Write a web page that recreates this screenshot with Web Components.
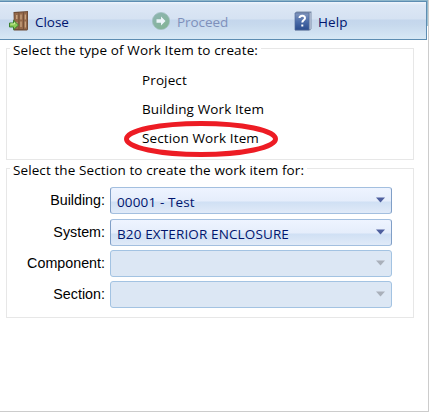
<!DOCTYPE html>
<html lang="en"><head><meta charset="utf-8"><title>Create Work Item</title>
<style>body{margin:0;background:#fff}</style></head><body>
<work-dialog>
  <tool-bar slot="bar">
    <tool-button style="width:143px;--gap:5px;--ls:-.05px">
      <svg slot="icon" width="21" height="20" viewBox="0 0 21 20"><path d="M4.500 1 19 0v18.500L18 19.500H5z" fill="#6f4e38"/><path d="M5.500 2h4v16h-4zM10.300 1.500h3.700v16.500h-3.700zM14.800 1.300H18v17h-3.200z" fill="#95694a"/><path d="M7 4h1.500v4H7zM11.300 3.500h1.400v5h-1.400zM15.700 3.500H17v5h-1.300zM7 11h1.500v4H7zM11.300 10.500h1.400v5.500h-1.400zM15.700 10.500H17v6h-1.300z" fill="#c7a27e"/><path d="M.5 12h4V9.200l5 4.800-5 4.800V16h-4z" fill="#8acb58" stroke="#39812f"/><path d="M1.500 13h4v-1.500" fill="none" stroke="#cdf2a0"/></svg>Close</tool-button>
    <tool-button disabled style="width:142px;--gap:7px;--ls:-.05px">
      <svg slot="icon" width="18" height="18" viewBox="0 0 18 18"><defs><linearGradient id="g" x2=".7" y2="1"><stop stop-color="#8fb5b4"/><stop offset="1" stop-color="#83b496"/></linearGradient></defs><circle cx="9" cy="9" r="8.600" fill="url(#g)" stroke="#a1bfbe" stroke-width=".7"/><path d="M4.500 7.300H9V4.500L13.500 9 9 13.500v-2.800H4.500z" fill="#edf5fa"/></svg>Proceed</tool-button>
    <tool-button style="width:100px;--gap:6px;--ls:.1px">
      <svg slot="icon" width="18" height="20" viewBox="0 0 18 20"><defs><linearGradient id="h" x2="0" y2="1"><stop stop-color="#8599be"/><stop offset=".5" stop-color="#4b6ca9"/><stop offset="1" stop-color="#294b8d"/></linearGradient></defs><path d="M1 2 2.500.5h15v17L16 19.500H1z" fill="#7e8faa"/><path d="M16 2v16" stroke="#d5dfef"/><path d="M1 2h14v17H1z" fill="url(#h)" stroke="#526c9b" stroke-width=".7"/><path d="M5.500 7c0-3 5.500-3 5.500.2C11 9 8.300 9.200 8.300 11.500M8.300 13.500v2" fill="none" stroke="#fff" stroke-width="2"/></svg>Help</tool-button>
  </tool-bar>
  <group-box caption="Select the type of Work Item to create:" style="--height:112px;--ls:.12px">
    <choice-list><choice-item>Project</choice-item><choice-item>Building Work Item</choice-item><choice-item marked>Section Work Item</choice-item></choice-list>
  </group-box>
  <group-box caption="Select the Section to create the work item for:" style="--height:150px;margin-top:8px;--ls:.1px">
    <form-rows>
      <combo-row label="Building:">00001 - Test</combo-row>
      <combo-row label="System:">B20 EXTERIOR ENCLOSURE</combo-row>
      <combo-row label="Component:" disabled></combo-row>
      <combo-row label="Section:" disabled></combo-row>
    </form-rows>
  </group-box>
</work-dialog>
<script>
const define=(name,markup,init)=>{
  const template=document.createElement('template');
  template.innerHTML='<style>*{box-sizing:border-box}</style>'+markup;
  customElements.define(name,class extends HTMLElement{
    constructor(){super();this.attachShadow({mode:'open'}).append(template.content.cloneNode(true));}
    connectedCallback(){if(init)init(this,this.shadowRoot);}
  });
};
define('work-dialog',`<style>:host{display:flex;flex-direction:column;box-sizing:border-box;width:429px;height:412px;padding-top:1px;border-right:1px solid #ccc;border-bottom:1px solid #ccc;background:linear-gradient(#8eb6ca,#8eb6ca) 0 0/429px 1px no-repeat,linear-gradient(#8eb6ca,#a4c7d6) 427px 0/1px 26px no-repeat,#fff;font:13.5px "Open Sans","Noto Sans",sans-serif;color:#000}main{padding:8px 0 0 6px}</style><slot name="bar"></slot><main><slot></slot></main>`);
define('tool-bar',`<style>:host{display:flex;box-sizing:border-box;width:427px;height:39px;padding-left:9px;border:1px solid #5d8db2;border-left:0;background:linear-gradient(#f0f5fc 0,#dce7f5 3px,#d5e2f2 17px,#c4d6ec 18px,#c7d9ed 23px,#d7e8f5 100%)}</style><slot></slot>`);
define('tool-button',`<style>:host{display:flex;align-items:center;gap:var(--gap);color:#00156e;letter-spacing:var(--ls);padding-top:1px;box-sizing:border-box}:host([disabled]){color:#7e90bb}::slotted(svg){flex:none}span{padding-top:2px}</style><slot name="icon"></slot><span><slot></slot></span>`);
define('group-box',`<style>:host{display:block;width:408px;height:var(--height)}section{height:100%;border:1px solid #e7e7e7}h2{width:max-content;height:18px;margin:-9px 0 0 3px;padding:0 3px;background:#fff;font:inherit;line-height:20px;white-space:nowrap;letter-spacing:var(--ls)}</style><section><h2></h2><slot></slot></section>`,(el,root)=>root.querySelector('h2').textContent=el.getAttribute('caption'));
define('choice-list',`<style>:host{display:flex;flex-direction:column;align-items:flex-start;padding:8px 0 0 135px}</style><slot></slot>`);
define('choice-item',`<style>:host{display:block;position:relative;height:29px;line-height:29px;letter-spacing:.12px;white-space:nowrap}svg{display:none;position:absolute;left:-18px;top:-4px}:host([marked]) svg{display:block}</style><slot></slot><svg width="155" height="38" viewBox="0 0 155 38"><ellipse cx="77" cy="19" rx="74.500" ry="15.500" fill="none" stroke="#ed1c24" stroke-width="5"/></svg>`);
define('form-rows',`<style>:host{display:grid;grid-template-rows:27px repeat(3,26px);row-gap:5px;padding-top:9px}</style><slot></slot>`);
define('combo-row',`<style>:host{display:grid;grid-template-columns:98px 282px;column-gap:5px}label{text-align:right;font:14.3px/27px "Liberation Sans",Arial,sans-serif}div{display:flex;align-items:center;justify-content:space-between;border:1px solid #a3bfdf;border-left-color:#809fc7;border-right-color:#809fc7;border-radius:3px;padding:2px 6px 0 6px;background:linear-gradient(#eef4ff 0,#e5edfb 13px,#d0e0f4 14px,#e0eaf8 100%);color:#00156e;white-space:nowrap;letter-spacing:.13px}span{line-height:20px}svg{margin-top:-3px;color:#4e5f9e}:host([disabled]) div{background:#dce7f4;border-color:#a3c3e2}:host([disabled]) svg{color:#a9b0ba}</style><label></label><div><span><slot></slot></span><svg width="9" height="6" viewBox="0 0 9 6"><path d="M0 .5h9L4.500 5.500z" fill="currentColor"/></svg></div>`,(el,root)=>root.querySelector('label').textContent=el.getAttribute('label'));
</script></body></html>
